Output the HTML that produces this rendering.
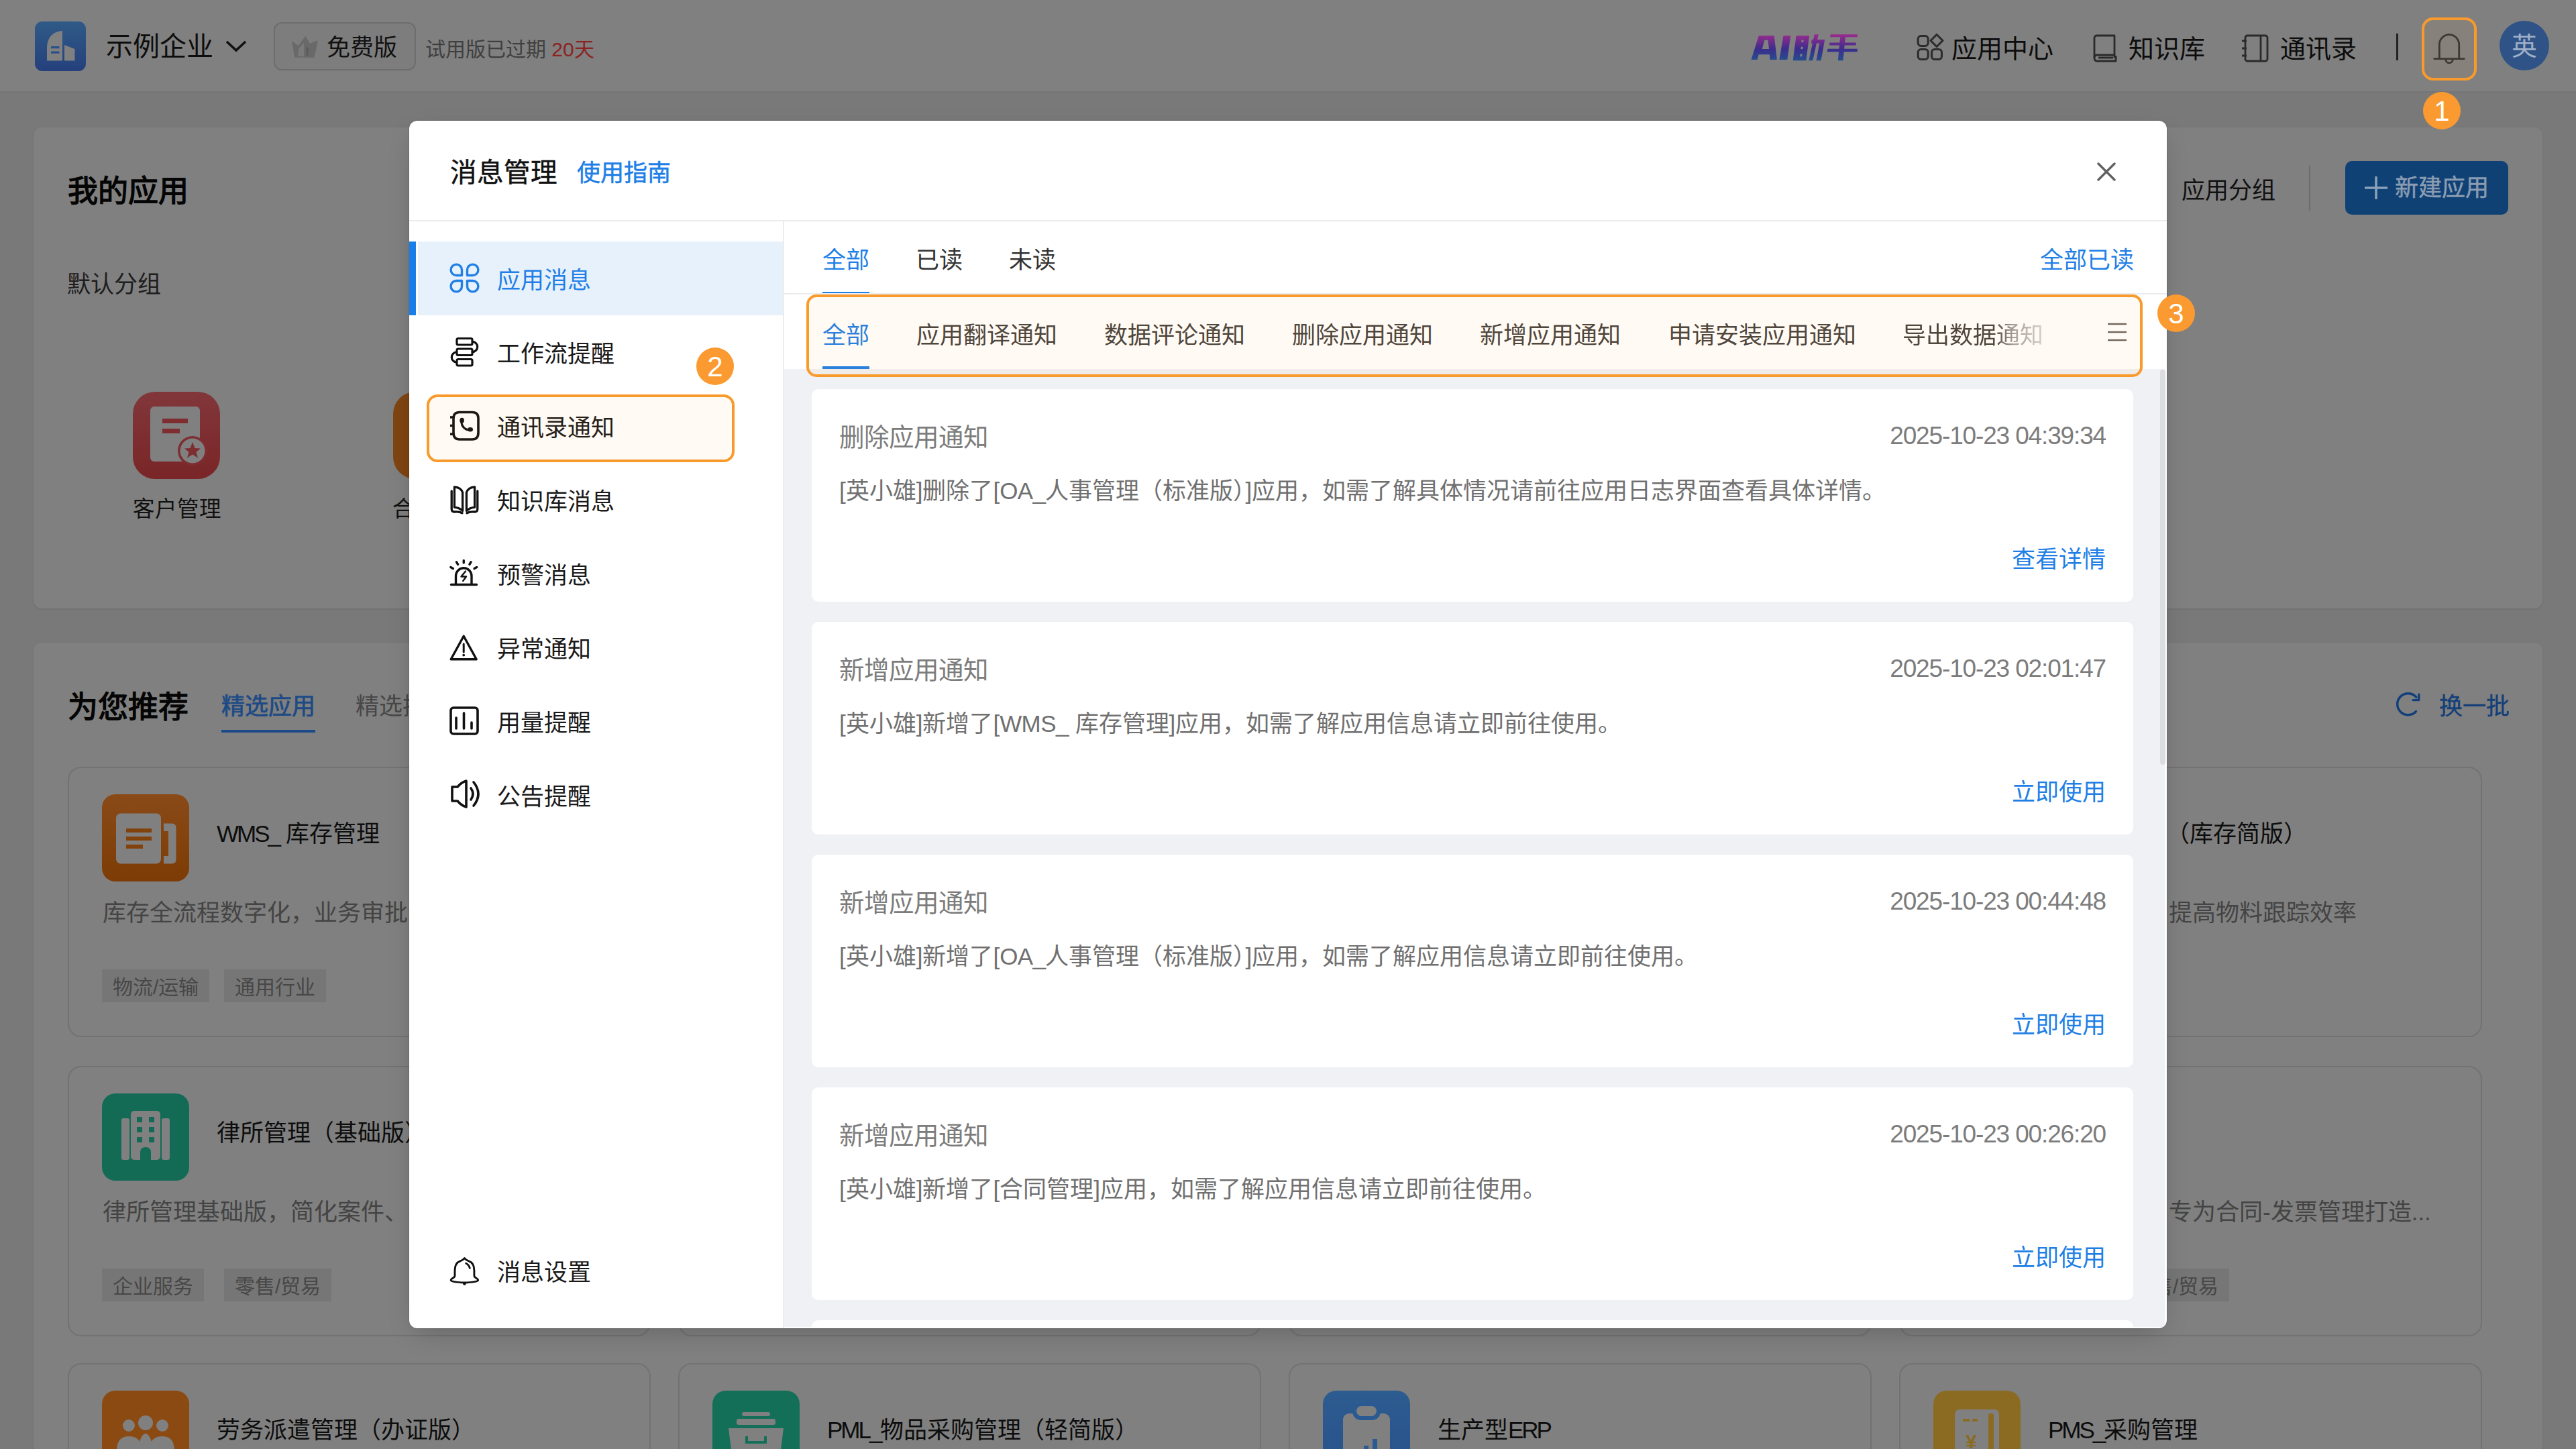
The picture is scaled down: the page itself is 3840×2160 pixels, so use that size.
<!DOCTYPE html>
<html lang="zh-CN"><head><meta charset="utf-8">
<style>
*{box-sizing:border-box;margin:0;padding:0}
html,body{width:3840px;height:2160px;overflow:hidden}
body{position:relative;background:#797979;font-family:"Liberation Sans",sans-serif;color:#111}
.a{position:absolute}
.t{position:absolute;white-space:nowrap;line-height:1}
.l{letter-spacing:-0.6px}
.ti .l{letter-spacing:-3px}
svg{position:absolute;overflow:visible}
/* background (already darkened) */
#hdr{left:0;top:0;width:3840px;height:138px;background:#808080;border-bottom:2px solid #767676}
.panel{background:#808080;border-radius:12px;box-shadow:0 1px 3px rgba(0,0,0,.1)}
.card{position:absolute;background:#808080;border:2px solid #727272;border-radius:20px;width:869px;height:403px;overflow:hidden}
.card .ic{position:absolute;left:50px;top:40px;width:130px;height:130px;border-radius:20px}
.card .ti{position:absolute;left:220px;top:81px;font-size:35px;line-height:36px;color:#0d0d0d;white-space:nowrap}
.card .de{position:absolute;left:50px;top:199px;font-size:35px;line-height:36px;color:#444;white-space:nowrap}
.card .tg{position:absolute;top:300px;height:49px;background:#767676;color:#474747;font-size:30px;line-height:45px;padding:4px 16px 0;white-space:nowrap}
/* modal */
#modal{left:610px;top:180px;width:2620px;height:1800px;background:#fff;border-radius:12px;overflow:hidden;box-shadow:0 0 2px rgba(0,0,0,.3),0 14px 40px -10px rgba(0,0,0,.22)}
.si{position:absolute;left:131px;font-size:35px;line-height:36px;color:#1a1a1a;white-space:nowrap}
.tab{position:absolute;font-size:35px;line-height:36px;color:#333;white-space:nowrap}
.blue{color:#1f7fe6}
.msg{position:absolute;left:600px;width:1970px;height:317px;background:#fff;border-radius:10px}
.msg .mt{position:absolute;left:41px;top:53px;font-size:37.5px;line-height:38px;color:#7c7c7c;white-space:nowrap}
.msg .tm{position:absolute;right:41px;top:51px;font-size:37px;line-height:38px;color:#7c7c7c;white-space:nowrap;letter-spacing:-1.15px}
.msg .bd{position:absolute;left:41px;top:134px;font-size:35px;line-height:36px;color:#707070;white-space:nowrap}
.msg .lk{position:absolute;right:41px;top:236px;font-size:35px;line-height:36px;color:#1f7fe6;white-space:nowrap}
/* annotations */
.box{position:absolute;border:4px solid #f99a2c;border-radius:16px;background:rgba(249,154,44,.05)}
.badge{position:absolute;width:56px;height:56px;border-radius:50%;background:#fa9a30;color:#fff;font-size:42px;line-height:58px;text-align:center}
</style></head><body>
<!-- ================= BACKGROUND ================= -->
<div id="hdr" class="a"></div>
<!-- header content -->
<svg style="left:52px;top:32px" width="76" height="74" viewBox="0 0 76 74">
<defs><linearGradient id="lg" x1="0" y1="0" x2="0" y2="1"><stop offset="0" stop-color="#2f5a87"/><stop offset="1" stop-color="#25407c"/></linearGradient></defs>
<rect width="76" height="74" rx="11" fill="url(#lg)"/>
<path d="M18,58.5 L18,38 Q19,16 41,14 L41,58.5 Z" fill="#808080"/>
<path d="M44,58.5 L44,35 L59.5,41 L59.5,58.5 Z" fill="#808080"/>
<rect x="24" y="37" width="12.5" height="3.2" fill="#29508a"/><rect x="24" y="44.5" width="12.5" height="3.2" fill="#29508a"/>
</svg>
<div class="t" style="left:158px;top:49px;font-size:40px;color:#0d0d0d">示例企业</div>
<svg style="left:336px;top:60px" width="32" height="18" viewBox="0 0 32 18"><polyline points="2,2 16,15 30,2" fill="none" stroke="#111" stroke-width="3.6"/></svg>
<div class="a" style="left:408px;top:33px;width:212px;height:72px;border:2px solid #6d6d6d;border-radius:12px;background:#7d7d7d"></div>
<svg style="left:434px;top:53px" width="40" height="34" viewBox="0 0 40 34"><path d="M1.8,9.4 L10.9,16 L21.3,1.9 L27.5,12.7 L39.1,8.2 L34.1,32 L5.9,32 Z" fill="#696969" stroke="#6a6a6a" stroke-width="1.5" stroke-linejoin="round"/><path d="M11,20 L19,11 L19,31 L10,31 Z" fill="#7a7a7a"/><path d="M22,16 L27,20 L25,31 L22,31 Z" fill="#5e5e5e"/></svg>
<div class="t" style="left:487px;top:53px;font-size:35px;color:#111">免费版</div>
<div class="t" style="left:634px;top:59px;font-size:30px;color:#3f3f3f">试用版已过期 <span style="color:#8c2222">20天</span></div>

<svg style="left:2600px;top:40px" width="180" height="60" viewBox="0 0 180 60">
<defs><linearGradient id="aig" x1="0" y1="11" x2="0" y2="51" gradientUnits="userSpaceOnUse"><stop offset="0" stop-color="#9c2a8e"/><stop offset=".55" stop-color="#3b2d8c"/><stop offset="1" stop-color="#25508e"/></linearGradient></defs>
<g fill="url(#aig)" fill-rule="evenodd">
<path d="M10.5,49 L21.7,13.3 L44.7,13.3 L48.9,49 L38.5,49 L37.8,41.2 L21.6,41.2 L19.6,49 Z M26.8,33 L30.4,19.8 L35.6,19.8 L37,33 Z"/>
<path d="M52.4,49 L58.4,13.3 L69.2,13.3 L64.3,49 Z"/>
<path d="M72.7,50.3 L77.5,13.3 L97.1,13.3 L92.3,50.3 Z M85.6,19.5 L88.8,19.5 L88.2,22.8 L85,22.8 Z M84.8,29.8 L88,29.8 L87.4,33.2 L84.2,33.2 Z M83.6,40.6 L86.8,40.6 L86.2,44.2 L83,44.2 Z"/>
<path d="M104.8,11.2 L110.8,11.2 L102.2,50.3 L96.4,50.3 Z"/>
<path d="M100.8,18.9 L120.2,18.9 L114.6,50.3 L107.5,50.3 L112.3,24.6 L100,24.6 Z"/>
<path d="M128.6,11.2 L169.1,11.2 L168.6,15.2 L128.1,15.2 Z"/><path d="M127.5,23.6 L167,23.6 L166.5,27.6 L127,27.6 Z"/><path d="M124.4,32.8 L169.1,32.8 L168.5,37.2 L123.8,37.2 Z"/><path d="M143.3,14 L151,14 L147.4,50.3 L139.8,50.3 Z"/>
</g></svg>
<svg style="left:2856px;top:49px" width="44" height="44" viewBox="0 0 44 44" fill="none" stroke="#2c2c2c" stroke-width="3.1">
<rect x="3.2" y="4.5" width="15" height="15" rx="4.5"/><rect x="3.2" y="24.5" width="15" height="15" rx="4.5"/><rect x="23.5" y="24.5" width="15" height="15" rx="4.5"/><path d="M31,2.5 L40,11.5 L31,20.5 L22,11.5 Z" stroke-linejoin="round"/>
</svg>
<div class="t" style="left:2909px;top:54px;font-size:38px;color:#0d0d0d">应用中心</div>
<svg style="left:3116px;top:50px" width="42" height="44" viewBox="0 0 42 44" fill="none" stroke="#2a2a2a" stroke-width="2.8" stroke-linejoin="round">
<path d="M6,36 L6,7 Q6,3 10,3 L36,3 L36,36"/><path d="M6,36 Q6,32 10,32 L36,32"/><path d="M6,36 Q6,41 10,41 L38,41 L38,33"/><path d="M12,36 L34,36"/>
</svg>
<div class="t" style="left:3173px;top:54px;font-size:38px;color:#0d0d0d">知识库</div>
<svg style="left:3340px;top:50px" width="44" height="44" viewBox="0 0 44 44" fill="none" stroke="#2a2a2a" stroke-width="2.8" stroke-linejoin="round">
<rect x="7" y="3" width="33" height="38" rx="3"/><path d="M30,3 L30,41"/><path d="M2,11 L9,11 M2,22 L9,22 M2,33 L9,33"/>
</svg>
<div class="t" style="left:3399px;top:54px;font-size:38px;color:#0d0d0d">通讯录</div>
<div class="a" style="left:3572px;top:50px;width:3px;height:40px;background:#222"></div>
<svg style="left:3627px;top:48px" width="48" height="50" viewBox="0 0 48 50" fill="none" stroke="#333" stroke-width="2.8" stroke-linecap="round">
<path d="M9.3,39.4 L9.3,18.4 A14.7,14.7 0 0 1 38.7,18.4 L38.7,39.4"/><path d="M1.8,39.6 L46.2,39.6"/><path d="M18.7,40.5 A5.3,5.3 0 0 0 29.3,40.5"/>
</svg>
<div class="a" style="left:3726px;top:31px;width:74px;height:74px;border-radius:50%;background:#2f5386"></div>
<div class="t" style="left:3744px;top:50px;font-size:38px;color:#9fb0c8">英</div>

<!-- panel 1 -->
<div class="a panel" style="left:50px;top:190px;width:3740px;height:717px"></div>
<div class="t" style="left:101px;top:263px;font-size:45px;font-weight:700;color:#050505">我的应用</div>
<div class="t" style="left:100px;top:406px;font-size:35px;color:#1e1e1e">默认分组</div>
<div class="a" style="left:198px;top:584px;width:130px;height:130px;border-radius:33px;background:linear-gradient(#81373a,#7a2527)"></div>
<svg style="left:198px;top:584px" width="130" height="130" viewBox="0 0 130 130">
<rect x="26" y="22" width="74" height="82" rx="6" fill="#808080"/>
<rect x="44" y="40" width="38" height="7" fill="#7e2d30"/><rect x="44" y="55" width="26" height="7" fill="#7e2d30"/>
<circle cx="89" cy="88" r="22" fill="#7e2d30"/><circle cx="89" cy="88" r="18.5" fill="#808080"/>
<path d="M89,75 L92.5,84 L101,84.5 L94.5,90 L97,98.5 L89,93.5 L81,98.5 L83.5,90 L77,84.5 L85.5,84 Z" fill="#7e2d30"/>
</svg>
<div class="t" style="left:198px;top:743px;font-size:32.5px;color:#111">客户管理</div>
<div class="a" style="left:586px;top:584px;width:130px;height:130px;border-radius:33px;background:#7f4512"></div>
<div class="t" style="left:585px;top:743px;font-size:32.5px;color:#111">合同管理</div>
<div class="t" style="left:3252px;top:266px;font-size:35px;color:#111">应用分组</div>
<div class="a" style="left:3442px;top:247px;width:2px;height:68px;background:#6c6c6c"></div>
<div class="a" style="left:3496px;top:240px;width:243px;height:80px;border-radius:10px;background:#0f4175"></div>
<svg style="left:3524px;top:262px" width="36" height="36" viewBox="0 0 36 36"><path d="M18,1 L18,35 M1,18 L35,18" stroke="#8aa0b8" stroke-width="3.6"/></svg>
<div class="t" style="left:3570px;top:262px;font-size:35px;color:#8a9cb2;-webkit-text-stroke:0.5px #8a9cb2">新建应用</div>

<!-- panel 2 -->
<div class="a panel" style="left:50px;top:958px;width:3740px;height:1300px"></div>
<div class="t" style="left:101px;top:1032px;font-size:45px;font-weight:700;color:#050505">为您推荐</div>
<div class="t" style="left:330px;top:1035px;font-size:35px;color:#1d4a85;-webkit-text-stroke:0.7px #1d4a85">精选应用</div>
<div class="a" style="left:330px;top:1088px;width:140px;height:4px;background:#1b4a88"></div>
<div class="t" style="left:530px;top:1035px;font-size:35px;color:#474747">精选插件</div>
<svg style="left:3571px;top:1034px" width="38" height="38" viewBox="0 0 38 38" fill="none" stroke="#123f7a" stroke-width="3.4" stroke-linecap="round" stroke-linejoin="round"><path d="M30.5,26.5 A16,16 0 1 1 31,5.5"/><path d="M26,9.6 L34.8,9.6 L34.8,1.2"/></svg>
<div class="t" style="left:3636px;top:1035px;font-size:35px;color:#143f78;-webkit-text-stroke:0.4px #143f78">换一批</div>

<!-- cards row1 -->
<div class="card" style="left:101px;top:1143px">
 <div class="ic" style="left:49px;top:39px;background:linear-gradient(#8a4a18,#7d3c05)"></div>
 <svg style="left:49px;top:39px" width="130" height="130" viewBox="0 0 130 130"><rect x="21" y="28.5" width="67" height="75" rx="7" fill="#808080"/><rect x="36" y="51" width="38" height="6" fill="#82420c"/><rect x="36" y="63" width="38" height="6" fill="#82420c"/><rect x="36" y="75" width="25" height="6" fill="#82420c"/><path d="M92,43.5 L104,43.5 Q110.5,43.5 110.5,50 L110.5,97 Q110.5,103.5 104,103.5 L92,103.5 L92,92 L99,92 L99,55 L92,55 Z" fill="#808080"/></svg>
 <div class="ti" style="top:80px"><span class="l">WMS_</span> 库存管理</div>
 <div class="de" style="top:198px">库存全流程数字化，业务审批全链路透明化</div>
 <div class="tg" style="left:49px">物流/运输</div><div class="tg" style="left:231px">通用行业</div>
</div>
<div class="card" style="left:1011px;top:1143px"></div>
<div class="card" style="left:1921px;top:1143px"></div>
<div class="card" style="left:2831px;top:1143px">
 <div class="ti" style="left:221px;top:80px">进销存管理（库存简版）</div>
 <div class="de" style="top:198px">实现库存精细化管理，提高物料跟踪效率</div>
</div>
<!-- row2 -->
<div class="card" style="left:101px;top:1589px">
 <div class="ic" style="left:49px;top:39px;background:#136b56"></div>
 <svg style="left:49px;top:39px" width="130" height="130" viewBox="0 0 130 130"><rect x="29" y="37" width="12" height="62" rx="3" fill="#808080"/><rect x="89" y="37" width="12" height="62" rx="3" fill="#808080"/><rect x="43" y="26" width="44" height="73" rx="5" fill="#808080"/><g fill="#136b56"><rect x="52" y="35" width="8" height="8"/><rect x="70" y="35" width="8" height="8"/><rect x="52" y="50" width="8" height="8"/><rect x="70" y="50" width="8" height="8"/><rect x="52" y="65" width="8" height="8"/><rect x="70" y="65" width="8" height="8"/><path d="M57,99 L57,88 Q57,80 65,80 Q73,80 73,88 L73,99 Z"/></g></svg>
 <div class="ti" style="top:80px">律所管理（基础版）</div>
 <div class="de" style="top:198px">律所管理基础版，简化案件、客户与合同管理</div>
 <div class="tg" style="left:49px">企业服务</div><div class="tg" style="left:231px">零售/贸易</div>
</div>
<div class="card" style="left:1011px;top:1589px"></div>
<div class="card" style="left:1921px;top:1589px"></div>
<div class="card" style="left:2831px;top:1589px">
 <div class="de" style="top:198px">合同发票管理基础版，专为合同-发票管理打造...</div>
 <div class="tg" style="left:330px">零售/贸易</div>
</div>
<!-- row3 -->
<div class="card" style="left:101px;top:2032px">
 <div class="ic" style="left:49px;top:39px;background:#8a4a12"></div>
 <svg style="left:49px;top:39px" width="130" height="130" viewBox="0 0 130 130"><g fill="#808080"><circle cx="40" cy="52" r="9"/><circle cx="65" cy="48" r="11"/><circle cx="90" cy="52" r="9"/><path d="M22,90 Q22,68 40,68 Q52,68 56,76 Q60,64 65,64 Q70,64 74,76 Q78,68 90,68 Q108,68 108,90 Z"/></g></svg>
 <div class="ti" style="top:80px">劳务派遣管理（办证版）</div>
</div>
<div class="card" style="left:1011px;top:2032px">
 <div class="ic" style="left:49px;top:39px;background:#136f58"></div>
 <svg style="left:49px;top:39px" width="130" height="130" viewBox="0 0 130 130"><g fill="#808080"><rect x="44" y="32" width="42" height="6" rx="3"/><rect x="36" y="42" width="58" height="9" rx="3"/><path d="M24,56 L106,56 L98,120 L32,120 Z"/></g><path d="M51,68 L51,77 L79,77 L79,68" fill="none" stroke="#136f58" stroke-width="4"/></svg>
 <div class="ti" style="top:80px"><span class="l">PML_</span>物品采购管理（轻简版）</div>
</div>
<div class="card" style="left:1921px;top:2032px">
 <div class="ic" style="left:49px;top:39px;background:linear-gradient(#2d5c90,#27508a)"></div>
 <svg style="left:49px;top:39px" width="130" height="130" viewBox="0 0 130 130"><g fill="#808080"><rect x="30" y="34" width="70" height="100" rx="9"/></g><rect x="44" y="18" width="42" height="26" rx="13" fill="#2a5a92"/><rect x="50" y="23" width="30" height="15" rx="7.5" fill="#808080"/><g fill="#2a5a92"><rect x="48" y="92" width="7" height="20"/><rect x="61" y="82" width="7" height="30"/><rect x="74" y="72" width="7" height="40"/></g></svg>
 <div class="ti" style="top:80px">生产型<span class="l">ERP</span></div>
</div>
<div class="card" style="left:2831px;top:2032px">
 <div class="ic" style="left:49px;top:39px;background:#8b6b22"></div>
 <svg style="left:49px;top:39px" width="130" height="130" viewBox="0 0 130 130"><rect x="32" y="28" width="66" height="100" rx="7" fill="#808080"/><rect x="82" y="34" width="8" height="90" rx="3" fill="#8b6b22"/><rect x="44" y="42" width="10" height="4" fill="#8b6b22"/><rect x="58" y="42" width="8" height="4" fill="#8b6b22"/><text x="48" y="86" font-size="30" font-weight="700" fill="#8b6b22">¥</text></svg>
 <div class="ti" style="top:80px"><span class="l">PMS_</span>采购管理</div>
</div>

<!-- ================= MODAL ================= -->
<div id="modal" class="a">
<div class="t" style="left:61px;top:58px;font-size:39.5px;color:#111;-webkit-text-stroke:0.5px #111">消息管理</div>
<div class="t blue" style="left:250px;top:60px;font-size:35px;-webkit-text-stroke:0.5px #1f7fe6">使用指南</div>
<svg style="left:2515px;top:61px" width="30" height="30" viewBox="0 0 30 30"><path d="M3,3 L27,27 M27,3 L3,27" stroke="#606060" stroke-width="3.4" stroke-linecap="round"/></svg>
<div class="a" style="left:0;top:148px;width:2620px;height:2px;background:#ececec"></div>
<!-- sidebar -->
<div class="a" style="left:557px;top:150px;width:2px;height:1650px;background:#ececec"></div>
<div class="a" style="left:13px;top:180px;width:544px;height:110px;background:#e7f1fc"></div>
<div class="a" style="left:0;top:180px;width:10px;height:110px;background:#1a7ee8"></div>
<svg style="left:60px;top:212px" width="45" height="45" viewBox="0 0 45 45" fill="none" stroke="#1f7fe6" stroke-width="3.4" stroke-linejoin="round">
<path d="M18.5,18.5 L10.3,18.5 A8.2,8.2 0 1 1 18.5,10.3 Z"/><path d="M26.5,18.5 L26.5,10.3 A8.2,8.2 0 1 1 34.7,18.5 Z"/><path d="M18.5,26.5 L18.5,34.7 A8.2,8.2 0 1 1 10.3,26.5 Z"/><path d="M26.5,26.5 L34.7,26.5 A8.2,8.2 0 1 1 26.5,34.7 Z"/>
</svg>
<div class="si blue" style="top:220px">应用消息</div>
<svg style="left:60px;top:322px" width="45" height="45" viewBox="0 0 45 45" fill="none" stroke="#111" stroke-width="3.2" stroke-linejoin="round">
<rect x="11" y="2.5" width="23" height="9.5" rx="2"/><rect x="11" y="18" width="23" height="9.5" rx="2"/><rect x="11" y="33.5" width="23" height="9.5" rx="2"/>
<path d="M34,7.25 A7.75,7.75 0 0 1 34,22.75"/><path d="M11,22.75 A7.75,7.75 0 0 0 11,38.25"/>
</svg>
<div class="si" style="top:330px">工作流提醒</div>
<svg style="left:60px;top:432px" width="45" height="45" viewBox="0 0 45 45" fill="none" stroke="#111" stroke-width="3.6" stroke-linejoin="round">
<path d="M15,2.5 L34,2.5 Q43,2.5 43,11.5 L43,33 Q43,43 34,43 L15,43 Q6,43 6,33 L6,11.5 Q6,2.5 15,2.5 Z"/>
<path d="M1,10 L6,10 M1,22.5 L6,22.5 M1,35 L6,35"/>
<path d="M18.3,15 Q17,23 24,27.5 Q27.5,29.5 31,28.3" stroke-width="3.2" stroke-linecap="round"/><ellipse cx="18.6" cy="14.8" rx="3.3" ry="4" fill="#111" stroke="none"/><ellipse cx="31" cy="28.2" rx="4" ry="3.2" fill="#111" stroke="none"/>
</svg>
<div class="si" style="top:440px">通讯录通知</div>
<svg style="left:60px;top:542px" width="45" height="45" viewBox="0 0 45 45" fill="none" stroke="#111" stroke-width="3.3" stroke-linejoin="round" stroke-linecap="round">
<path d="M19.6,39.5 L19.6,12 Q17,4.5 7.4,3.8 L7.4,34.2 Q14.5,35 19.6,39.5 Z"/><path d="M25.4,39.5 L25.4,12 Q28,4.5 37.6,3.8 L37.6,34.2 Q30.5,35 25.4,39.5 Z"/>
<path d="M3.2,10 L3.2,37 Q3.2,41.2 8.5,41 Q15,40.6 19,42.8"/><path d="M41.8,10 L41.8,37 Q41.8,41.2 36.5,41 Q30,40.6 26,42.8"/>
</svg>
<div class="si" style="top:550px">知识库消息</div>
<svg style="left:60px;top:654px" width="45" height="45" viewBox="0 0 45 45" fill="none" stroke="#111" stroke-width="3.4" stroke-linecap="round" stroke-linejoin="round">
<path d="M9.5,37 L9.5,24.5 A11.75,11.75 0 0 1 33,24.5 L33,37"/><path d="M2.5,37.5 L40.5,37.5"/>
<path d="M21.25,1.5 L21.25,5 M10.5,3.8 L12.6,7.4 M32,3.8 L29.9,7.4 M1.8,11.6 L5.4,13.6 M40.7,11.6 L37.1,13.6"/>
<path d="M24,17.5 L17.5,25.5 L25,25.5 L20.2,32" stroke-width="2.4"/>
</svg>
<div class="si" style="top:660px">预警消息</div>
<svg style="left:60px;top:762px" width="45" height="45" viewBox="0 0 45 45" fill="none" stroke="#111" stroke-width="3.4" stroke-linejoin="round">
<path d="M21.2,6.2 L40.2,40.8 L2.2,40.8 Z"/><path d="M21.2,18 L21.2,30" stroke-linecap="round" stroke-width="3"/><circle cx="21.2" cy="34.6" r="1.9" fill="#111" stroke="none"/>
</svg>
<div class="si" style="top:770px">异常通知</div>
<svg style="left:60px;top:872px" width="45" height="45" viewBox="0 0 45 45" fill="none" stroke="#111" stroke-width="3.6" stroke-linejoin="round">
<rect x="2" y="3" width="40" height="39" rx="4"/><path d="M10,18 L10,34 M21.5,11 L21.5,34 M33,25 L33,34" stroke-linecap="round"/>
</svg>
<div class="si" style="top:880px">用量提醒</div>
<svg style="left:60px;top:982px" width="45" height="45" viewBox="0 0 45 45" fill="none" stroke="#111" stroke-width="3.6" stroke-linejoin="round" stroke-linecap="round">
<path d="M25,2 Q18,4 12,11 L4,11 L4,32 L12,32 Q18,39 25,41 Z"/><path d="M32,13 Q38,21.5 32,30"/><path d="M36,4 Q50,21.5 36,39"/>
</svg>
<div class="si" style="top:990px">公告提醒</div>
<svg style="left:60px;top:1694px" width="45" height="45" viewBox="0 0 45 45" fill="none" stroke="#111" stroke-width="2.9" stroke-linejoin="round">
<path d="M22.4,1.6 Q20,4.6 16,5.8 Q8,8.5 8,20 L8,27.8 Q8,29.6 5,31.2 Q1.8,33 2.2,34.6 Q3.5,37.2 22.4,38 Q41.3,37.2 42.6,34.6 Q43,33 39.8,31.2 Q36.9,29.6 36.9,27.8 L36.9,20 Q36.9,8.5 28.8,5.8 Q24.8,4.6 22.4,1.6 Z"/>
<path d="M24.7,9.3 Q29,11.5 30.4,16.5" stroke-width="2.8" stroke-linecap="round"/><circle cx="22.4" cy="39.6" r="2.3" fill="#111" stroke="none"/>
</svg>
<div class="si" style="top:1699px">消息设置</div>
<!-- content -->
<div class="tab blue" style="left:616px;top:190px">全部</div>
<div class="tab" style="left:755px;top:190px">已读</div>
<div class="tab" style="left:894px;top:190px">未读</div>
<div class="a" style="left:616px;top:255px;width:70px;height:5px;background:#1f7fe6"></div>
<div class="tab blue" style="left:2431px;top:190px">全部已读</div>
<div class="a" style="left:559px;top:257px;width:2061px;height:2px;background:#ececec"></div>
<div class="tab blue" style="left:616px;top:302px">全部</div>
<div class="tab" style="left:756px;top:302px;color:#46423e">应用翻译通知</div>
<div class="tab" style="left:1036px;top:302px;color:#46423e">数据评论通知</div>
<div class="tab" style="left:1316px;top:302px;color:#46423e">删除应用通知</div>
<div class="tab" style="left:1596px;top:302px;color:#46423e">新增应用通知</div>
<div class="tab" style="left:1877px;top:302px;color:#46423e">申请安装应用通知</div>
<div class="tab" style="left:2226px;top:302px;-webkit-mask-image:linear-gradient(90deg,#000 0,#000 138px,rgba(0,0,0,.5) 165px,rgba(0,0,0,.22) 210px);mask-image:linear-gradient(90deg,#000 0,#000 138px,rgba(0,0,0,.5) 165px,rgba(0,0,0,.22) 210px);color:#46423e">导出数据通知</div>
<svg style="left:2531px;top:301px" width="30" height="28" viewBox="0 0 30 28"><path d="M1,2 L29,2 M1,14 L29,14 M1,26 L29,26" stroke="#6c6762" stroke-width="2.6"/></svg>
<div class="a" style="left:616px;top:366px;width:70px;height:5px;background:#1f7fe6"></div>
<div class="a" style="left:559px;top:370px;width:2058px;height:1428px;background:#f0f1f4"></div>
<div class="a" style="left:2610px;top:371px;width:8px;height:589px;border-radius:4px;background:#dcdde0"></div>

<div class="msg" style="top:400px"><div class="mt">删除应用通知</div><div class="tm">2025-10-23 04:39:34</div><div class="bd">[英小雄]删除了[<span class="l">OA_</span>人事管理（标准版）]应用，如需了解具体情况请前往应用日志界面查看具体详情。</div><div class="lk">查看详情</div></div>
<div class="msg" style="top:747px"><div class="mt">新增应用通知</div><div class="tm">2025-10-23 02:01:47</div><div class="bd">[英小雄]新增了[<span class="l">WMS_</span> 库存管理]应用，如需了解应用信息请立即前往使用。</div><div class="lk">立即使用</div></div>
<div class="msg" style="top:1094px"><div class="mt">新增应用通知</div><div class="tm">2025-10-23 00:44:48</div><div class="bd">[英小雄]新增了[<span class="l">OA_</span>人事管理（标准版）]应用，如需了解应用信息请立即前往使用。</div><div class="lk">立即使用</div></div>
<div class="msg" style="top:1441px"><div class="mt">新增应用通知</div><div class="tm">2025-10-23 00:26:20</div><div class="bd">[英小雄]新增了[合同管理]应用，如需了解应用信息请立即前往使用。</div><div class="lk">立即使用</div></div>
<div class="msg" style="top:1788px"></div>

</div>
<!-- ================= ANNOTATIONS ================= -->
<div class="box" style="left:3610px;top:26px;width:82px;height:94px;border-radius:17px"></div>
<div class="badge" style="left:3612px;top:137px">1</div>
<div class="box" style="left:636px;top:588px;width:459px;height:101px"></div>
<div class="badge" style="left:1038px;top:518px">2</div>
<div class="box" style="left:1202px;top:439px;width:1992px;height:123px;border-radius:15px"></div>
<div class="badge" style="left:3216px;top:439px">3</div>

</body></html>
